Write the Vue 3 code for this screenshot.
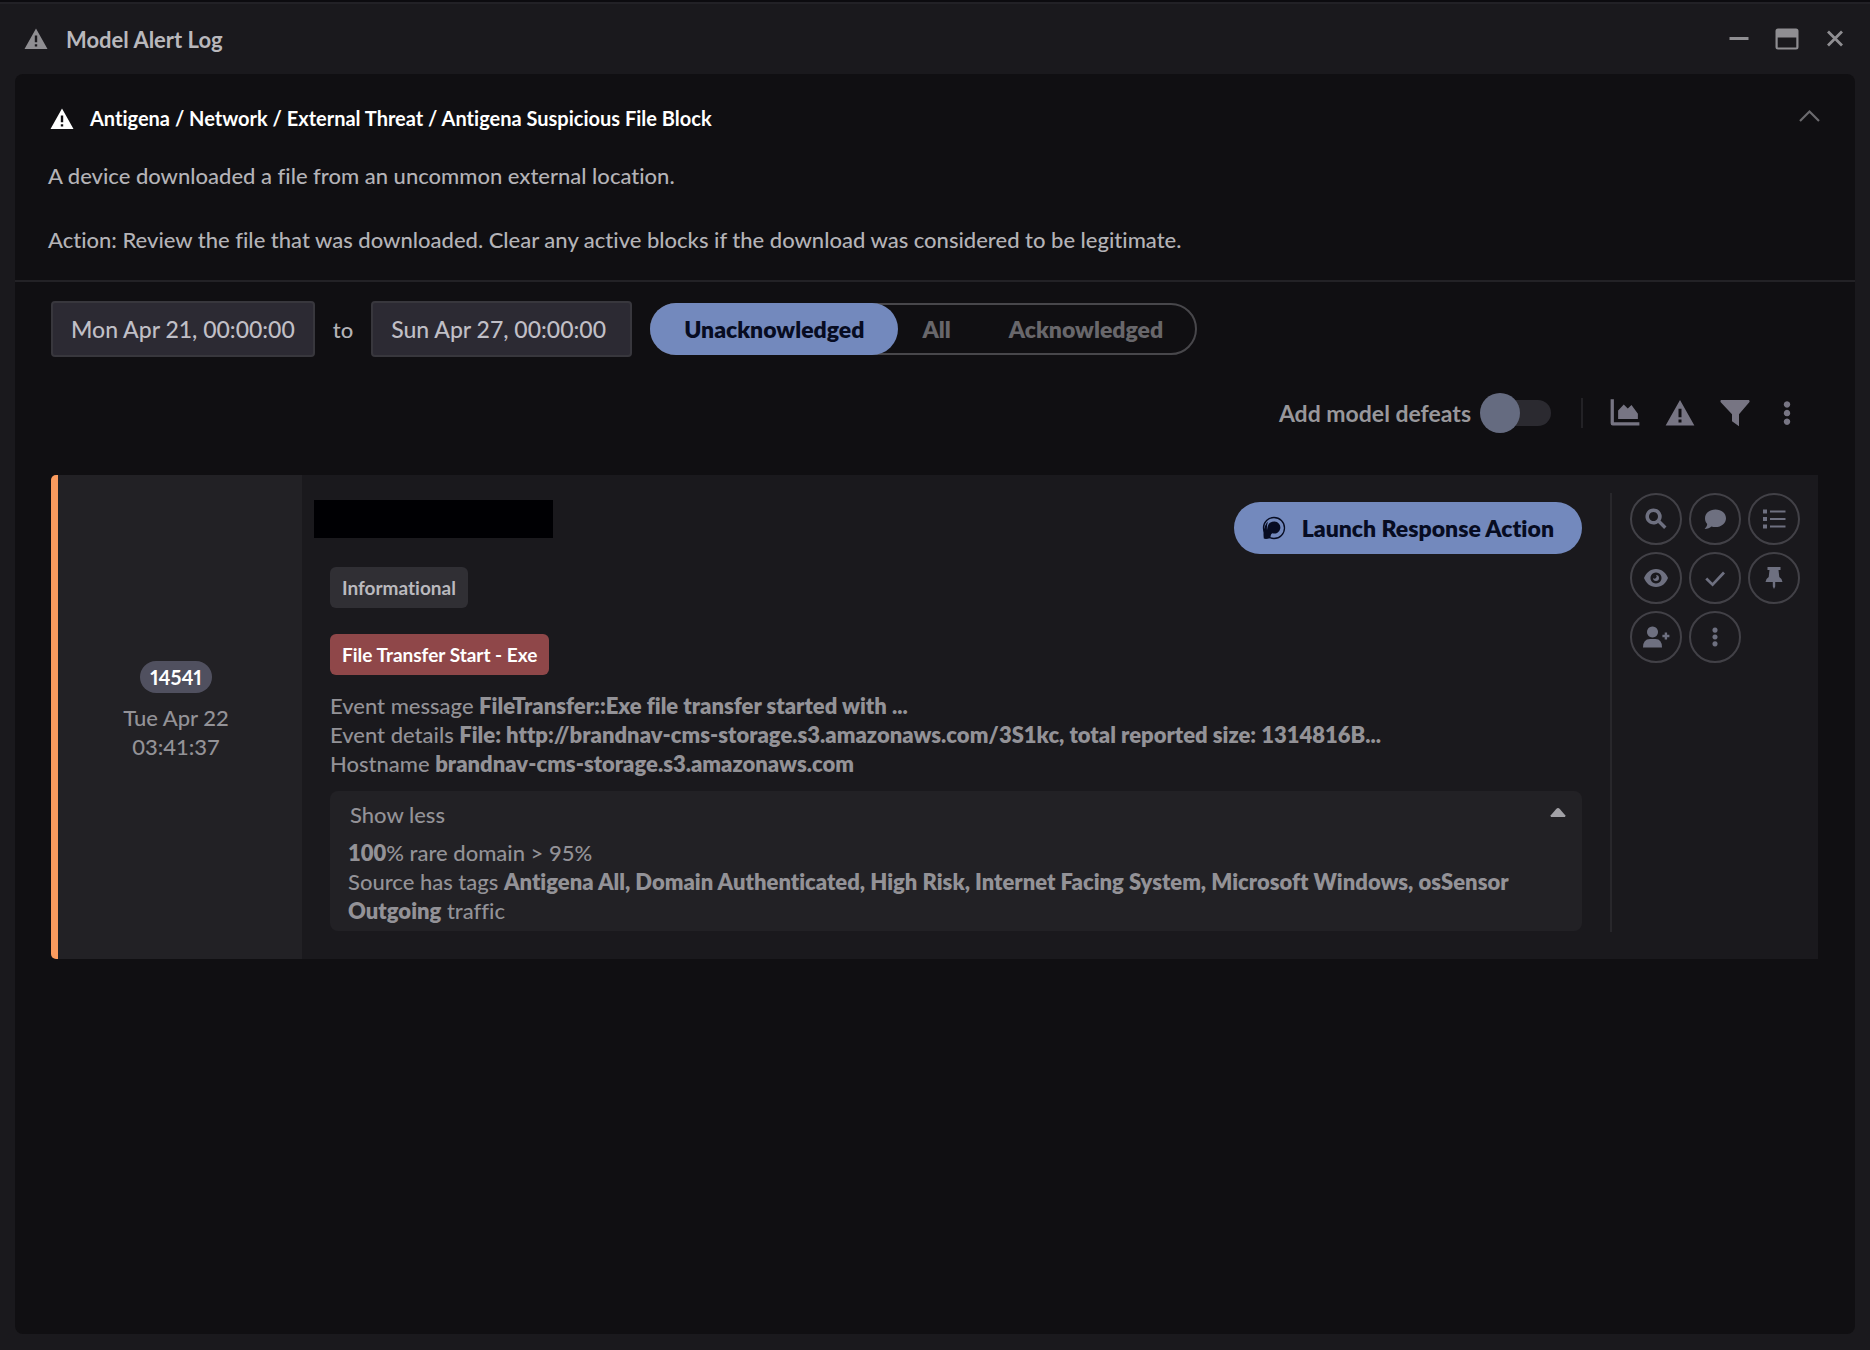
<script setup>
import { ref } from 'vue'

const from = ref('Mon Apr 21, 00:00:00')
const to = ref('Sun Apr 27, 00:00:00')
const states = ['Unacknowledged', 'All', 'Acknowledged']
const state = ref('Unacknowledged')
const defeats = ref(false)

const warning = 'M12 1.5 23.5 22H.5ZM10.8 8.5v6.8h2.4V8.5ZM10.8 17.2v2.4h2.4v-2.4Z'
const dots = 'M12 2.5a2.6 2.6 0 1 0 .01 0ZM12 9.4a2.6 2.6 0 1 0 .01 0ZM12 16.3a2.6 2.6 0 1 0 .01 0Z'

const tools = [
  { name: 'Chart', path: 'M.5 1h2.6v18.4h20.4V22H2.2Q.5 22 .5 20.2ZM6.5 16.8V10L11 5.2 14.2 8.4 17.2 5.6 22.3 12.5V16.8Z' },
  { name: 'Alerts', path: warning },
  { name: 'Filter', path: 'M.8 1.5H23.2Q24.2 2.5 23.4 3.4L15.2 13V22.5L9.6 18.6V13L.6 3.4Q-.2 2.3 .8 1.5Z' },
  { name: 'More', path: dots }
]

const actions = [
  { name: 'Search', path: 'M9.5 1.5a8 8 0 1 0 4.6 14.5l6 6 2.4-2.4-6-6A8 8 0 0 0 9.5 1.5ZM9.5 5a4.5 4.5 0 1 1-.01 0Z' },
  { name: 'Comment', path: 'M12.5 2.5C6.5 2.5 2 6.2 2 11.2C2 13.5 2.8 15.4 4.2 17C4 19 3 20.5 1.6 22C4.6 22 6.8 21 8.4 19.5C9.7 19.9 11 20.1 12.5 20.1C18.5 20.1 23 16.3 23 11.3S18.5 2.5 12.5 2.5Z' },
  { name: 'List', path: 'M1 2.5h4v4H1ZM1 10h4v4H1ZM1 17.5h4v4H1ZM8 3.5h15.5v2H8ZM8 11h15.5v2H8ZM8 18.5h15.5v2H8Z' },
  { name: 'View', path: 'M12 3C6 3 2 7 0 12C2 17 6 21 12 21S22 17 24 12C22 7 18 3 12 3ZM12 6.5a5.5 5.5 0 1 1-.01 0ZM12 9a3 3 0 1 1-3 3A1.7 1.7 0 0 0 12 9Z' },
  { name: 'Acknowledge', path: 'M4.2 11.5 9.5 16.8 20 5.5 22 7.4 9.6 20.5 2.3 13.4Z' },
  { name: 'Pin', path: 'M5.5 1h13v3h-2l.8 7q3 1.8 3.2 5h-7.3v4.5L12 23l-1.2-2.5V16H3.5q.2-3.2 3.2-5l.8-7h-2Z' },
  { name: 'Assign', path: 'M8.5 1.5a5.5 5.5 0 1 0 .01 0ZM-1 22.5Q-1 14 6 14H11.5Q18 14 18 22.5ZM20.7 7.5h2.4v2.3h2.3v2.4h-2.3v2.3h-2.4v-2.3h-2.3V9.8h2.3Z' },
  { name: 'More actions', path: dots }
]
</script>

<template>
  <div class="window">
    <header class="titlebar">
      <svg class="icon" viewBox="0 0 24 24"><path :d="warning" /></svg>
      <h1>Model Alert Log</h1>
      <button class="plain" aria-label="Minimise">
        <svg class="icon" viewBox="0 0 24 24"><path d="M2.500 10h19v3h-19z" /></svg>
      </button>
      <button class="plain" aria-label="Maximise">
        <svg class="icon" viewBox="0 0 24 24"><path d="M3 1.500H21Q23.500 1.500 23.500 4V20Q23.500 22.500 21 22.500H3Q.5 22.500 .5 20V4Q.5 1.500 3 1.500ZM2.700 10.500V20.500H21.300V10.500Z" /></svg>
      </button>
      <button class="plain" aria-label="Close">
        <svg class="icon" viewBox="0 0 24 24"><path d="M5 4.500 19 18.500M19 4.500 5 18.500" fill="none" stroke="currentColor" stroke-width="2.800" /></svg>
      </button>
    </header>

    <main class="panel">
      <section class="summary">
        <div class="heading">
          <svg class="icon" viewBox="0 0 24 24"><path :d="warning" /></svg>
          <h2>Antigena / Network / External Threat / Antigena Suspicious File Block</h2>
          <button class="plain" aria-label="Collapse">
            <svg class="icon" viewBox="0 0 24 24"><path d="M2 14 11.500 4.500 21 14" fill="none" stroke="currentColor" stroke-width="2.200" /></svg>
          </button>
        </div>
        <p>A device downloaded a file from an uncommon external location.</p>
        <p>Action: Review the file that was downloaded. Clear any active blocks if the download was considered to be legitimate.</p>
      </section>

      <form class="filters" @submit.prevent>
        <input id="from" v-model="from" type="text" aria-label="From" />
        <label for="to">to</label>
        <input id="to" v-model="to" type="text" />
        <div class="segments">
          <button
            v-for="s in states"
            :key="s"
            type="button"
            :class="{ active: s === state }"
            :aria-pressed="s === state"
            @click="state = s"
          >{{ s }}</button>
        </div>
      </form>

      <div class="toolbar">
        <label class="toggle">Add model defeats<input v-model="defeats" type="checkbox" role="switch" /></label>
        <div class="tools">
          <button v-for="t in tools" :key="t.name" class="plain" :aria-label="t.name">
            <svg viewBox="0 0 24 24"><path :d="t.path" /></svg>
          </button>
        </div>
      </div>

      <article class="alert">
        <div class="when">
          <span class="count">14541</span>
          <time>Tue Apr 22<br />03:41:37</time>
        </div>

        <div class="body">
          <div class="top">
            <span class="redacted"></span>
            <button class="launch">
              <svg class="icon" viewBox="0 0 24 24">
                <circle cx="12" cy="12" r="10.500" fill="none" stroke="currentColor" stroke-width="1.300" />
                <path d="M12.500 5.500a6 6 0 1 1-2 11.700Q8.500 18 8.300 22Q4 23.500 1.800 22.500Q.8 15 3 10Q4 7 6 5.500Q4.500 10 5 14Q5.500 8.500 8 6.800Q10 5.500 12.500 5.500Z" />
              </svg>
              Launch Response Action
            </button>
          </div>
          <span class="tag">Informational</span>
          <span class="tag danger">File Transfer Start - Exe</span>
          <div class="lines">
            <p>Event message <b>FileTransfer::Exe file transfer started with ...</b></p>
            <p>Event details <b>File: http://brandnav-cms-storage.s3.amazonaws.com/3S1kc, total reported size: 1314816B...</b></p>
            <p>Hostname <b>brandnav-cms-storage.s3.amazonaws.com</b></p>
          </div>
          <div class="details">
            <button class="less">
              Show less
              <svg viewBox="0 0 16 10"><path d="M8 0Q9 0 10 1L16 8V10H0V8L6 1Q7 0 8 0Z" /></svg>
            </button>
            <div class="lines">
              <p><b>100</b>% rare domain &gt; 95%</p>
              <p>Source has tags <b>Antigena All, Domain Authenticated, High Risk, Internet Facing System, Microsoft Windows, osSensor</b></p>
              <p><b>Outgoing</b> traffic</p>
            </div>
          </div>
        </div>

        <div class="actions">
          <button v-for="a in actions" :key="a.name" :aria-label="a.name">
            <svg viewBox="0 0 24 24"><path :d="a.path" /></svg>
          </button>
        </div>
      </article>
    </main>
  </div>
</template>

<style>
body {
  margin: 0;
  background: #1a191d;
}
</style>

<style scoped>
.window,
.window * {
  box-sizing: border-box;
}

.window {
  display: flex;
  flex-direction: column;
  min-height: 100vh;
  border-top: 2px solid #0c0b0f;
  background: #1a191d;
  color: #b4b3b7;
  font-family: Lato, "Liberation Sans", sans-serif;
  font-size: 22px;
  font-weight: 500;
  line-height: 29px;
  font-variant-ligatures: none;
}

h1,
h2,
p {
  margin: 0;
}

button,
input {
  font: inherit;
  font-variant-ligatures: none;
  color: inherit;
}

button {
  padding: 0;
  border: 0;
  background: none;
  cursor: pointer;
}

svg {
  display: block;
  fill: currentColor;
  fill-rule: evenodd;
  overflow: visible;
}

.icon {
  flex: none;
  width: 24px;
  height: 24px;
}

.titlebar {
  display: flex;
  align-items: center;
  gap: 24px;
  height: 72px;
  padding: 0 23px 0 24px;
  border-top: 2px solid #222126;
  color: #8f8e92;
}

.titlebar h1 {
  flex: 1;
  margin-left: -6px;
  color: #b9b8bc;
  font-size: 22px;
  font-weight: 700;
}

.panel {
  flex: 1;
  margin: 0 15px 16px;
  border-radius: 8px;
  background: #100f12;
}

.summary {
  padding: 30px 33px 26px;
  border-bottom: 2px solid #232226;
}

.heading {
  display: flex;
  align-items: center;
  gap: 16px;
  padding-left: 2px;
  color: #fff;
}

.heading h2 {
  flex: 1;
  font-size: 20px;
  font-weight: 700;
}

.heading .plain {
  color: #6b6a6e;
}

.summary p {
  margin-top: 28px;
}

.summary p + p {
  margin-top: 35px;
}

.filters {
  display: flex;
  align-items: center;
  gap: 18px;
  padding: 19px 36px 0;
}

.filters input {
  field-sizing: content;
  min-width: 261px;
  height: 56px;
  padding: 0 18px;
  border: 2px solid #38373d;
  border-radius: 4px;
  background: #2c2a33;
  color: #c0bfc6;
  font-size: 23px;
}

.segments {
  display: flex;
  height: 52px;
  padding: 0 3px;
  border: 2px solid #48474b;
  border-radius: 26px;
  color: #68676b;
  font-size: 23px;
  font-weight: 800;
}

.segments button {
  padding: 0 29px;
}

.segments .active {
  margin: -2px -5px;
  padding: 0 34px;
  border-radius: 26px;
  background: #7389bd;
  color: #070c22;
}

.toolbar {
  display: flex;
  align-items: center;
  justify-content: flex-end;
  gap: 30px;
  height: 40px;
  margin: 36px 56px 0 36px;
}

.toggle {
  display: flex;
  align-items: center;
  gap: 9px;
  color: #98979b;
  font-size: 23px;
  font-weight: 700;
}

.toggle input {
  position: relative;
  width: 71px;
  height: 40px;
  margin: 0;
  appearance: none;
}

.toggle input::before {
  content: "";
  position: absolute;
  inset: 7px 0 7px 7px;
  border-radius: 13px;
  background: #2b2a30;
}

.toggle input::after {
  content: "";
  position: absolute;
  inset: 0 auto 0 0;
  width: 40px;
  border-radius: 50%;
  background: #656b80;
}

.toggle input:checked::after {
  inset: 0 0 0 auto;
}

.tools {
  display: flex;
  gap: 25px;
  padding-left: 27px;
  border-left: 2px solid #232226;
  color: #777583;
}

.tools svg {
  width: 30px;
  height: 30px;
}

.tools button:last-child {
  margin: 0 -3px;
}

.alert {
  display: flex;
  margin: 42px 37px 0 36px;
  border-left: 7px solid #fb9b5e;
  border-radius: 5px 0 0 5px;
  background: #1a191d;
  color: #939297;
}

.when {
  display: flex;
  flex: none;
  flex-direction: column;
  align-items: center;
  justify-content: center;
  gap: 10px;
  width: 244px;
  padding: 0 8px 12px 0;
  background: #222125;
  text-align: center;
}

.count {
  padding: 0 10px;
  border-radius: 16px;
  background: #50505f;
  color: #fff;
  font-size: 20px;
  font-weight: 700;
  font-variant-numeric: proportional-nums;
  line-height: 32px;
}

.body {
  display: flex;
  flex: 1;
  flex-direction: column;
  align-items: flex-start;
  min-width: 0;
  padding: 25px 28px 28px;
}

.top {
  display: flex;
  align-self: stretch;
  align-items: flex-start;
  justify-content: space-between;
  height: 67px;
}

.redacted {
  width: 239px;
  height: 38px;
  margin-left: -16px;
  background: #000003;
}

.launch {
  display: flex;
  align-items: center;
  gap: 16px;
  height: 52px;
  margin-top: 2px;
  padding: 0 28px;
  border-radius: 26px;
  background: #7389bd;
  color: #070c22;
  font-size: 23px;
  font-weight: 800;
}

.tag {
  padding: 0 12px;
  border-radius: 6px;
  background: #302f34;
  color: #bab9be;
  font-size: 19px;
  font-weight: 700;
  line-height: 41px;
}

.danger {
  margin: 26px 0 16px;
  background: #8f4749;
  color: #fff;
}

.lines b {
  font-weight: 800;
}

.details {
  align-self: stretch;
  margin-top: 13px;
  padding: 9px 16px 6px 18px;
  border-radius: 8px;
  background: #222125;
}

.less {
  display: flex;
  align-items: center;
  justify-content: space-between;
  width: 100%;
  margin-bottom: 9px;
  padding-left: 2px;
}

.less svg {
  width: 16px;
  height: 9px;
  margin-bottom: 4px;
  color: #a2a1a6;
}

.actions {
  display: grid;
  flex: none;
  grid-template-columns: repeat(3, 52px);
  align-content: start;
  gap: 7px;
  margin: 18px 18px 27px 0;
  padding-left: 18px;
  border-left: 2px solid #28272b;
  color: #6e7080;
}

.actions button {
  display: grid;
  place-items: center;
  height: 52px;
  border: 2px solid #424147;
  border-radius: 50%;
}

.actions svg {
  width: 24px;
  height: 24px;
}
</style>
